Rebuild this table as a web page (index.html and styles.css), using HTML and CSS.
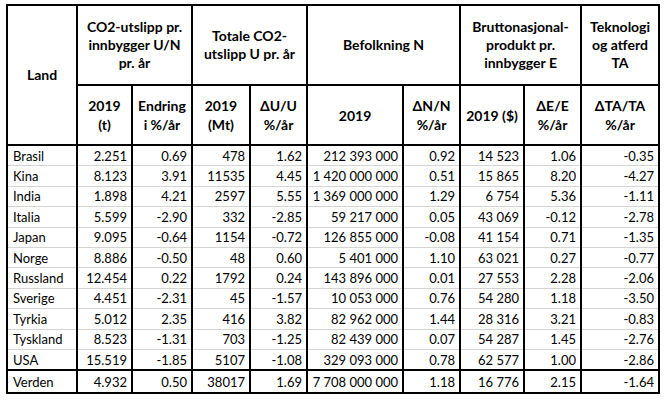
FILE: index.html
```html
<!DOCTYPE html>
<html lang="no">
<head>
<meta charset="utf-8">
<link rel="stylesheet" href="styles.css">
</head>
<body>
<div class="wrap">
<table class="tbl">
  <colgroup>
    <col class="w-land"><col class="w-a"><col class="w-b"><col class="w-c"><col class="w-d"><col class="w-e"><col class="w-f"><col class="w-g"><col class="w-h"><col class="w-i">
  </colgroup>
  <thead>
    <tr class="h1">
      <th rowspan="2" class="g">Land</th>
      <th colspan="2" class="g">CO2-utslipp pr.<br>innbygger U/N<br>pr. år</th>
      <th colspan="2" class="g">Totale CO2-<br>utslipp U pr. år</th>
      <th colspan="2" class="g">Befolkning N</th>
      <th colspan="2" class="g">Bruttonasjonal-<br>produkt pr.<br>innbygger E</th>
      <th class="g">Teknologi<br>og atferd<br>TA</th>
    </tr>
    <tr class="h2">
      <th class="g">2019<br>(t)</th>
      <th class="g">Endring<br>i %/år</th>
      <th class="g">2019<br>(Mt)</th>
      <th class="g">ΔU/U<br>%/år</th>
      <th class="g">2019</th>
      <th class="g">ΔN/N<br>%/år</th>
      <th class="g">2019 ($)</th>
      <th class="g">ΔE/E<br>%/år</th>
      <th class="g">ΔTA/TA<br>%/år</th>
    </tr>
  </thead>
  <tbody>
    <tr><td class="name">Brasil</td><td>2.251</td><td class="gr">0.69</td><td>478</td><td class="gr">1.62</td><td>212 393 000</td><td class="gr">0.92</td><td>14 523</td><td class="gr">1.06</td><td class="gr">-0.35</td></tr>
    <tr><td class="name">Kina</td><td>8.123</td><td class="gr">3.91</td><td>11535</td><td class="gr">4.45</td><td>1 420 000 000</td><td class="gr">0.51</td><td>15 865</td><td class="gr">8.20</td><td class="gr">-4.27</td></tr>
    <tr><td class="name">India</td><td>1.898</td><td class="gr">4.21</td><td>2597</td><td class="gr">5.55</td><td>1 369 000 000</td><td class="gr">1.29</td><td>6 754</td><td class="gr">5.36</td><td class="gr">-1.11</td></tr>
    <tr><td class="name">Italia</td><td>5.599</td><td class="gr">-2.90</td><td>332</td><td class="gr">-2.85</td><td>59 217 000</td><td class="gr">0.05</td><td>43 069</td><td class="gr">-0.12</td><td class="gr">-2.78</td></tr>
    <tr><td class="name">Japan</td><td>9.095</td><td class="gr">-0.64</td><td>1154</td><td class="gr">-0.72</td><td>126 855 000</td><td class="gr">-0.08</td><td>41 154</td><td class="gr">0.71</td><td class="gr">-1.35</td></tr>
    <tr><td class="name">Norge</td><td>8.886</td><td class="gr">-0.50</td><td>48</td><td class="gr">0.60</td><td>5 401 000</td><td class="gr">1.10</td><td>63 021</td><td class="gr">0.27</td><td class="gr">-0.77</td></tr>
    <tr><td class="name">Russland</td><td>12.454</td><td class="gr">0.22</td><td>1792</td><td class="gr">0.24</td><td>143 896 000</td><td class="gr">0.01</td><td>27 553</td><td class="gr">2.28</td><td class="gr">-2.06</td></tr>
    <tr><td class="name">Sverige</td><td>4.451</td><td class="gr">-2.31</td><td>45</td><td class="gr">-1.57</td><td>10 053 000</td><td class="gr">0.76</td><td>54 280</td><td class="gr">1.18</td><td class="gr">-3.50</td></tr>
    <tr><td class="name">Tyrkia</td><td>5.012</td><td class="gr">2.35</td><td>416</td><td class="gr">3.82</td><td>82 962 000</td><td class="gr">1.44</td><td>28 316</td><td class="gr">3.21</td><td class="gr">-0.83</td></tr>
    <tr><td class="name">Tyskland</td><td>8.523</td><td class="gr">-1.31</td><td>703</td><td class="gr">-1.25</td><td>82 439 000</td><td class="gr">0.07</td><td>54 287</td><td class="gr">1.45</td><td class="gr">-2.76</td></tr>
    <tr><td class="name">USA</td><td>15.519</td><td class="gr">-1.85</td><td>5107</td><td class="gr">-1.08</td><td>329 093 000</td><td class="gr">0.78</td><td>62 577</td><td class="gr">1.00</td><td class="gr">-2.86</td></tr>
  </tbody>
  <tfoot>
    <tr><td class="name">Verden</td><td>4.932</td><td class="gr">0.50</td><td>38017</td><td class="gr">1.69</td><td>7 708 000 000</td><td class="gr">1.18</td><td>16 776</td><td class="gr">2.15</td><td class="gr">-1.64</td></tr>
  </tfoot>
</table>
</div>
</body>
</html>
```

FILE: styles.css
```css
html, body {
  margin: 0;
  padding: 0;
  background: #ffffff;
}

.wrap {
  padding: 4px 0 0 6px;
}

.tbl {
  border-collapse: collapse;
  table-layout: fixed;
  width: 652px;
  font-family: Lato, "Liberation Sans", sans-serif;
  font-size: 14px;
  color: #000;
  border: 2px solid #000;
}

.w-land { width: 70px; }
.w-a { width: 55px; }
.w-b { width: 60px; }
.w-c { width: 58px; }
.w-d { width: 57px; }
.w-e { width: 96px; }
.w-f { width: 57px; }
.w-g { width: 64px; }
.w-h { width: 57px; }
.w-i { width: 78px; }

.tbl th {
  font-weight: 700;
  text-align: center;
  vertical-align: middle;
  padding: 0 2px;
  border: 2px solid #000;
  line-height: 18px;
}

.h1 th { height: 78px; }
.h2 th { height: 58px; line-height: 19px; }

.tbl td {
  font-size: 13px;
  text-align: right;
  vertical-align: middle;
  padding: 0 4px 0 2px;
  height: 19.4px;
  line-height: 18px;
  border-top: 1px solid #d4d4d4;
  border-bottom: 1px solid #d4d4d4;
  border-left: 2px solid #000;
  border-right: 2px solid #000;
  white-space: nowrap;
}

.tbl td.gr {
  border-left: 1px solid #d4d4d4;
}

.tbl td.name {
  text-align: left;
  padding-left: 5px;
}

.tbl tfoot td {
  border-top: 2px solid #000;
  border-bottom: 2px solid #000;
  height: 21px;
}
```
